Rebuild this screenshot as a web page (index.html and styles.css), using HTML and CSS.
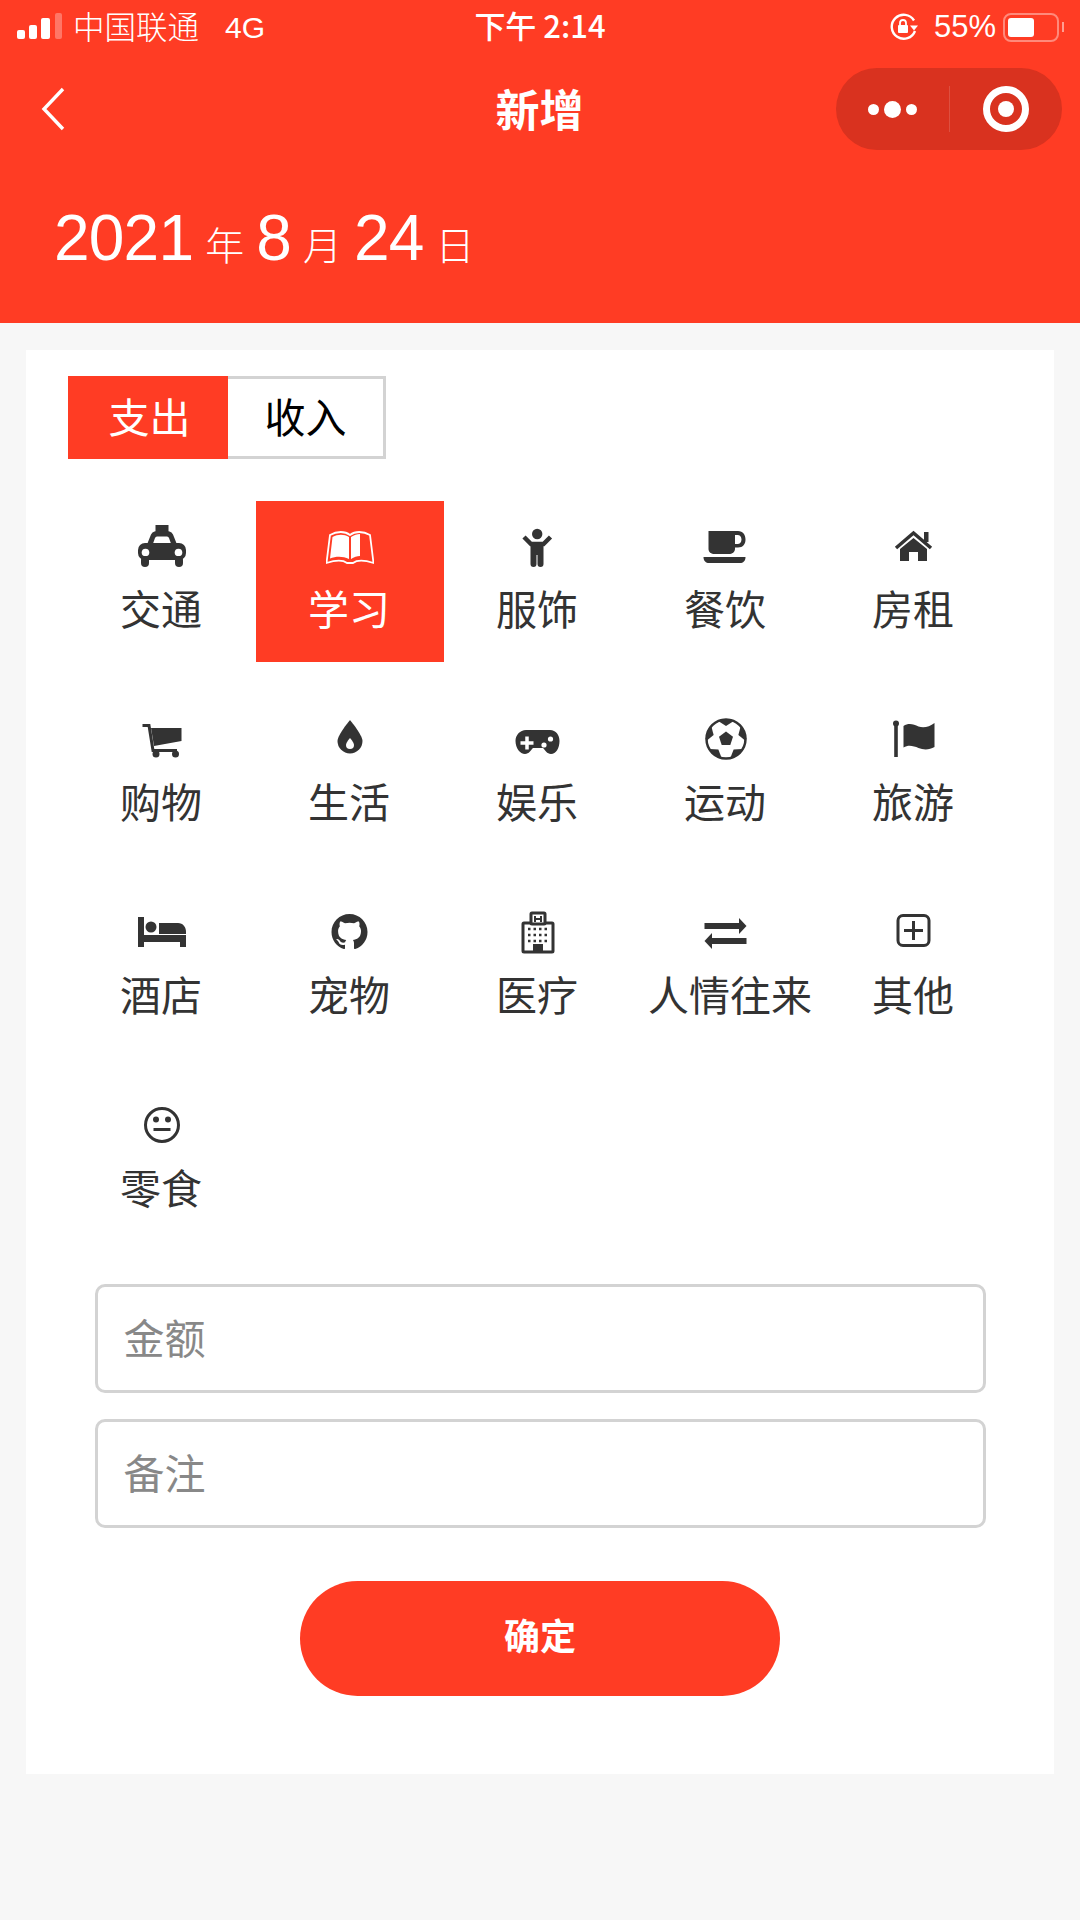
FILE: index.html
```html
<!DOCTYPE html>
<html lang="zh-CN">
<head>
    <meta charset="UTF-8">
    <meta name="viewport" content="width=device-width, initial-scale=1.0">
    <title>新增</title>
    <link rel="stylesheet" href="styles.css">
</head>
<body>

<div class="header">
    <div class="status-bar">
        <div class="status-left">
            <svg class="signal" width="48" height="30" viewBox="0 0 48 30">
                <rect x="0" y="18" width="8" height="9" rx="2" fill="#fff"/>
                <rect x="12" y="13" width="8" height="14" rx="2" fill="#fff"/>
                <rect x="24" y="6" width="9" height="21" rx="2" fill="#fff"/>
                <rect x="38" y="1" width="7" height="26" rx="2" fill="#fff" opacity="0.3"/>
            </svg>
            <span class="carrier">中国联通</span>
            <span class="network">4G</span>
        </div>
        <div class="status-time">下午 2:14</div>
        <div class="status-right">
            <svg class="rotation-lock" width="30" height="28" viewBox="0 0 30 28">
                <path d="M25 7.5A12 12 0 1 0 26 18" fill="none" stroke="#fff" stroke-width="2.4"/>
                <path d="M21 12.5h8l-4 5z" fill="#fff"/>
                <rect x="9" y="12" width="10" height="8" rx="1" fill="#fff"/>
                <path d="M11 12V10a3 3 0 0 1 6 0v2" fill="none" stroke="#fff" stroke-width="1.8"/>
            </svg>
            <span class="battery-text">55%</span>
            <div class="battery"><div class="battery-fill"></div></div>
            <div class="battery-nub"></div>
        </div>
    </div>

    <div class="nav">
        <svg class="back" width="24" height="44" viewBox="0 0 24 44">
            <path d="M22 2L3 22l19 20" fill="none" stroke="#fff" stroke-width="3.4"/>
        </svg>
        <div class="nav-title">新增</div>
        <div class="capsule">
            <div class="capsule-dots">
                <span class="dot"></span>
                <span class="dot dot-big"></span>
                <span class="dot"></span>
            </div>
            <div class="capsule-line"></div>
            <div class="capsule-ring"><span class="ring-dot"></span></div>
        </div>
    </div>

    <div class="date">
        <span class="date-num">2021</span>
        <span class="date-unit">年</span>
        <span class="date-num">8</span>
        <span class="date-unit">月</span>
        <span class="date-num">24</span>
        <span class="date-unit">日</span>
    </div>
</div>

<div class="card">
    <div class="tabs">
        <div class="tab tab-active">支出</div>
        <div class="tab">收入</div>
    </div>

    <div class="category-grid">
        <div class="category">
            <svg class="icon" viewBox="0 0 48 48">
                <rect x="17.5" y="3" width="13" height="7"/>
                <path d="M8 25l4-10q1.500-6 7-6h10q5.500 0 7 6l4 10z"/>
                <path d="M14.500 23l2.500-7q.5-1.500 2-1.500h10q1.500 0 2 1.500l2.500 7z" fill="#fff"/>
                <rect x="0" y="21" width="48" height="17" rx="7"/>
                <circle cx="7.5" cy="30.5" r="3.8" fill="#fff"/>
                <circle cx="40.5" cy="30.5" r="3.8" fill="#fff"/>
                <rect x="3" y="34" width="8" height="11" rx="4"/>
                <rect x="37" y="34" width="8" height="11" rx="4"/>
            </svg>
            <div class="category-name">交通</div>
        </div>
        <div class="category category-active">
            <svg class="icon" viewBox="0 0 48 48">
                <path d="M.5 41L4 13c7-4 15-4 20 0 5-4 13-4 20 0l3.500 28c-9.500-3-16.500-3-20.500 0h-6c-4-3-11-3-20.500 0z" fill="none" stroke="#fff" stroke-width="1.8"/>
                <path d="M6.500 15c5.500-3 11.500-3 16.500 0v22c-6-3-13-3-19-.5z" fill="#fff"/>
                <path d="M25 15c3-2 6-3 9-3v22c-3 0-6 1-9 3z" fill="#fff"/>
            </svg>
            <div class="category-name">学习</div>
        </div>
        <div class="category">
            <svg class="icon" viewBox="0 0 48 48">
                <circle cx="23.2" cy="12" r="5.2"/>
                <path d="M10 15l7 7h12.500l7-7" fill="none" stroke="#333" stroke-width="4.5"/>
                <path d="M16.500 20h13v22a3 3 0 0 1-6 0V33h-1v9a3 3 0 0 1-6 0z"/>
            </svg>
            <div class="category-name">服饰</div>
        </div>
        <div class="category">
            <svg class="icon" viewBox="0 0 48 48">
                <path fill-rule="evenodd" d="M6.5 9H36c5 0 7.500 4 7.500 8.500S41 25.500 36 25.500h-3V27c0 3-3 5-6 5H13c-4 0-6.500-2-6.500-5zM33 13v9h2.500c2.500 0 4-2 4-4.500S38 13 35.500 13z"/>
                <path d="M1.500 35h42c0 4-2.500 6-5.500 6H7c-3 0-5.500-2-5.500-6z"/>
            </svg>
            <div class="category-name">餐饮</div>
        </div>
        <div class="category">
            <svg class="icon" viewBox="0 0 48 48">
                <path d="M6 26l17.500-15L41 26" fill="none" stroke="#333" stroke-width="3.5"/>
                <rect x="34" y="10" width="4.5" height="10"/>
                <path d="M10 27l13.500-11L37 27v12h-9V30h-9v9h-9z"/>
            </svg>
            <div class="category-name">房租</div>
        </div>

        <div class="category">
            <svg class="icon" viewBox="0 0 48 48">
                <path d="M4.500 10.500H11l4 25h24" fill="none" stroke="#333" stroke-width="3"/>
                <path d="M13 13h30.500v13L16 31z"/>
                <circle cx="18" cy="39" r="3.5"/>
                <circle cx="37.5" cy="39" r="3.5"/>
            </svg>
            <div class="category-name">购物</div>
        </div>
        <div class="category">
            <svg class="icon" viewBox="0 0 48 48">
                <path d="M24 5c0 0 12.500 15 12.500 21a12.500 12.500 0 0 1-25 0C11.500 20 24 5 24 5z"/>
                <path d="M24 23c0 0-4 4.500-4 7a4 4 0 0 0 8 0c0-2.500-4-7-4-7z" fill="#fff"/>
            </svg>
            <div class="category-name">生活</div>
        </div>
        <div class="category">
            <svg class="icon" viewBox="0 0 48 48">
                <path d="M12 15h24c6 0 9.500 5 9.500 11 0 7-3.500 13-8.500 13-4 0-6-4-8-6H19c-2 2-4 6-8 6-5 0-9.500-6-9.500-13C1.500 20 6 15 12 15z"/>
                <path d="M13 21.500v13M6.500 28h13" stroke="#fff" stroke-width="3.5"/>
                <circle cx="36.5" cy="24" r="2.6" fill="#fff"/>
                <circle cx="30" cy="30" r="2.6" fill="#fff"/>
            </svg>
            <div class="category-name">娱乐</div>
        </div>
        <div class="category">
            <svg class="icon" viewBox="0 0 48 48">
                <circle cx="24" cy="24" r="19.5" fill="#fff" stroke="#333" stroke-width="2.5"/>
                <path d="M24 16.500l7 5.200-2.700 8.300h-8.600L17 21.700z"/>
                <g id="ball-patch">
                    <path d="M18 4.500h12l1 2-7 4.500-7-4.500z"/>
                </g>
                <use href="#ball-patch" transform="rotate(72 24 24)"/>
                <use href="#ball-patch" transform="rotate(144 24 24)"/>
                <use href="#ball-patch" transform="rotate(216 24 24)"/>
                <use href="#ball-patch" transform="rotate(288 24 24)"/>
            </svg>
            <div class="category-name">运动</div>
        </div>
        <div class="category">
            <svg class="icon" viewBox="0 0 48 48">
                <circle cx="6" cy="8.5" r="3"/>
                <rect x="4.2" y="9" width="3.6" height="33"/>
                <path d="M13.500 11c5-3.500 10-2 15 .5 5 1.500 11 .5 16-3.500v24c-5 3-11 3-16 1-5-2-10-3.500-15-.5z"/>
            </svg>
            <div class="category-name">旅游</div>
        </div>

        <div class="category">
            <svg class="icon" viewBox="0 0 48 48">
                <rect x="0" y="9" width="6" height="30"/>
                <rect x="0" y="27" width="48" height="7"/>
                <rect x="42" y="27" width="6" height="12"/>
                <circle cx="13" cy="19" r="5.5"/>
                <path d="M21 15h19c5 0 8 4 8 9v2H21z"/>
            </svg>
            <div class="category-name">酒店</div>
        </div>
        <div class="category">
            <svg class="icon" viewBox="0 0 48 48">
                <path transform="translate(5.5 6) scale(2.25)" d="M8 0C3.580 0 0 3.580 0 8c0 3.540 2.290 6.530 5.470 7.590.4.070.55-.17.55-.38 0-.19-.01-.82-.01-1.490-2.010.37-2.530-.49-2.690-.94-.09-.23-.48-.94-.82-1.130-.28-.15-.68-.52-.01-.53.63-.01 1.080.58 1.230.82.72 1.210 1.870.87 2.330.66.070-.52.28-.87.51-1.070-1.780-.2-3.640-.89-3.640-3.950 0-.87.31-1.590.82-2.150-.08-.2-.36-1.020.08-2.120 0 0 .67-.21 2.200.82.64-.18 1.320-.27 2-.27.68 0 1.360.09 2 .27 1.530-1.040 2.200-.82 2.200-.82.44 1.100.16 1.920.08 2.120.51.56.82 1.270.82 2.150 0 3.070-1.870 3.750-3.650 3.950.29.25.54.73.54 1.480 0 1.070-.01 1.930-.01 2.200 0 .21.15.46.55.38A8.013 8.013 0 0 0 16 8c0-4.420-3.580-8-8-8z"/>
            </svg>
            <div class="category-name">宠物</div>
        </div>
        <div class="category">
            <svg class="icon" viewBox="0 0 48 48">
                <rect x="9" y="15" width="30" height="29" rx="1" fill="none" stroke="#333" stroke-width="3"/>
                <rect x="17" y="5" width="14" height="11" rx="1" fill="#fff" stroke="#333" stroke-width="3"/>
                <path d="M21 8v6M27 8v6M21 11h6" stroke="#333" stroke-width="2"/>
                <path d="M14 21h20M14 27h20M14 33h20" stroke="#333" stroke-width="2.4" stroke-dasharray="2.5 3"/>
                <rect x="19" y="36" width="10" height="8"/>
            </svg>
            <div class="category-name">医疗</div>
        </div>
        <div class="category">
            <svg class="icon" viewBox="0 0 48 48">
                <path d="M2.500 15H37v-5l7.500 8-7.500 8v-5H2.500z"/>
                <path d="M44.500 30H10v-5l-7.500 8 7.500 8v-5h34.500z"/>
            </svg>
            <div class="category-name category-name-long">人情往来</div>
        </div>
        <div class="category">
            <svg class="icon" viewBox="0 0 48 48">
                <rect x="8" y="7.5" width="31" height="30" rx="5" fill="none" stroke="#333" stroke-width="3"/>
                <path d="M23.500 13v19M14 22.500h19" stroke="#333" stroke-width="3"/>
            </svg>
            <div class="category-name">其他</div>
        </div>

        <div class="category">
            <svg class="icon" viewBox="0 0 48 48">
                <circle cx="24" cy="24" r="16.5" fill="none" stroke="#333" stroke-width="3"/>
                <circle cx="18" cy="18.5" r="3"/>
                <circle cx="30" cy="18.5" r="3"/>
                <path d="M15.500 28.500h17" stroke="#333" stroke-width="3"/>
            </svg>
            <div class="category-name">零食</div>
        </div>
    </div>

    <div class="form">
        <input class="field" type="text" placeholder="金额">
        <input class="field" type="text" placeholder="备注">
        <button class="submit-btn">确定</button>
    </div>
</div>

</body>
</html>
```

FILE: styles.css
```css
/* General styling */
body {
    margin: 0;
    background-color: #f7f7f7;
    font-family: "Noto Sans CJK SC", "Liberation Sans", sans-serif;
    color: #333333;
}

/* Red header */
.header {
    height: 323px;
    background-color: #ff3c24;
    color: #ffffff;
    overflow: hidden;
}

.status-bar {
    display: grid;
    grid-template-columns: 1fr auto 1fr;
    align-items: center;
    height: 54px;
    font-family: "Liberation Sans", "Noto Sans CJK SC", sans-serif;
    font-size: 30px;
}

.status-left {
    display: flex;
    align-items: center;
    padding-left: 17px;
}

.signal {
    margin-right: 8px;
}

.carrier {
    margin-bottom: 5px;
    font-family: "Noto Sans CJK SC", sans-serif;
    font-size: 31.5px;
    font-weight: 300;
}

.network {
    margin-left: 26px;
    margin-top: 1px;
}

.status-time {
    margin-bottom: 6px;
    font-family: "Noto Sans CJK SC", sans-serif;
    font-size: 31px;
    font-weight: 500;
}

.status-right {
    display: flex;
    align-items: center;
    justify-content: flex-end;
    padding-right: 16px;
}

.rotation-lock {
    margin-bottom: 1px;
}

.battery-text {
    margin-left: 15px;
    margin-right: 7px;
    font-size: 31px;
}

.battery {
    box-sizing: border-box;
    width: 56px;
    height: 29px;
    padding: 3px;
    border: 2px solid rgba(255, 255, 255, 0.4);
    border-radius: 8px;
}

.battery-fill {
    width: 26px;
    height: 19px;
    background-color: #ffffff;
    border-radius: 3px;
}

.battery-nub {
    width: 2px;
    height: 10px;
    margin-left: 3px;
    background-color: rgba(255, 255, 255, 0.5);
}

/* Navigation row */
.nav {
    display: grid;
    grid-template-columns: 1fr auto 1fr;
    align-items: center;
    margin-top: 14px;
    padding: 0 18px 0 41px;
}

.nav-title {
    margin-left: -24px;
    padding-bottom: 2px;
    font-size: 44px;
    font-weight: 700;
    line-height: 80px;
}

.capsule {
    justify-self: end;
    display: flex;
    align-items: center;
    box-sizing: border-box;
    width: 226px;
    height: 82px;
    background-color: #d9321f;
    border-radius: 41px;
}

.capsule-dots {
    display: flex;
    align-items: center;
    justify-content: center;
    gap: 5px;
    width: 113px;
}

.dot {
    width: 11px;
    height: 11px;
    background-color: #ffffff;
    border-radius: 50%;
}

.dot-big {
    width: 17px;
    height: 17px;
}

.capsule-line {
    width: 1px;
    height: 46px;
    background-color: rgba(255, 255, 255, 0.15);
}

.capsule-ring {
    display: flex;
    align-items: center;
    justify-content: center;
    box-sizing: border-box;
    width: 46px;
    height: 46px;
    margin-left: 33px;
    border: 7px solid #ffffff;
    border-radius: 50%;
}

.ring-dot {
    width: 16px;
    height: 16px;
    background-color: #ffffff;
    border-radius: 50%;
}

/* Date line */
.date {
    display: flex;
    align-items: baseline;
    gap: 12px;
    margin-top: 43px;
    padding-left: 54px;
    font-family: "Liberation Sans", "Noto Sans CJK SC", sans-serif;
}

.date-num {
    font-size: 64px;
    letter-spacing: -0.8px;
    line-height: 90px;
}

.date-unit {
    font-family: "Noto Sans CJK SC", sans-serif;
    font-size: 39px;
    font-weight: 300;
}

/* White card */
.card {
    box-sizing: border-box;
    width: 1028px;
    height: 1424px;
    margin: 27px 0 0 26px;
    padding: 26px 42px 0;
    background-color: #ffffff;
}

.tabs {
    display: flex;
    width: 318px;
    height: 83px;
}

.tab {
    box-sizing: border-box;
    flex: 1;
    display: flex;
    align-items: center;
    justify-content: center;
    padding-bottom: 5px;
    border: 3px solid #d3d3d3;
    border-left: none;
    font-size: 41px;
    color: #000000;
}

.tab-active {
    flex: 0 0 160px;
    padding-left: 3px;
    background-color: #ff3c24;
    border: none;
    color: #ffffff;
}

/* Category grid */
.category-grid {
    display: grid;
    grid-template-columns: repeat(5, 188px);
    grid-auto-rows: 161px;
    row-gap: 32px;
    margin-top: 42px;
}

.category {
    display: flex;
    flex-direction: column;
    align-items: center;
    padding-top: 21px;
    fill: #333333;
}

.category-active {
    background-color: #ff3c24;
    color: #ffffff;
    fill: #ffffff;
}

.icon {
    width: 48px;
    height: 48px;
    flex-shrink: 0;
}

.category-name {
    margin-top: 9px;
    margin-right: 2px;
    font-size: 41px;
    line-height: 56px;
    white-space: nowrap;
}

.category-name-long {
    padding-left: 10px;
}

/* Inputs and button */
.form {
    display: flex;
    flex-direction: column;
    align-items: center;
    gap: 26px;
    margin-top: 43px;
}

.field {
    box-sizing: border-box;
    width: 891px;
    height: 109px;
    padding: 0 26px 5px;
    background-color: #ffffff;
    border: 3px solid #d3d3d3;
    border-radius: 10px;
    font-family: "Noto Sans CJK SC", sans-serif;
    font-size: 41px;
}

.field::placeholder {
    color: #888888;
}

.submit-btn {
    width: 480px;
    height: 115px;
    margin-top: 27px;
    padding-bottom: 10px;
    background-color: #ff3c24;
    border: none;
    border-radius: 58px;
    color: #ffffff;
    font-family: "Noto Sans CJK SC", sans-serif;
    font-size: 36px;
    font-weight: 700;
}
```
